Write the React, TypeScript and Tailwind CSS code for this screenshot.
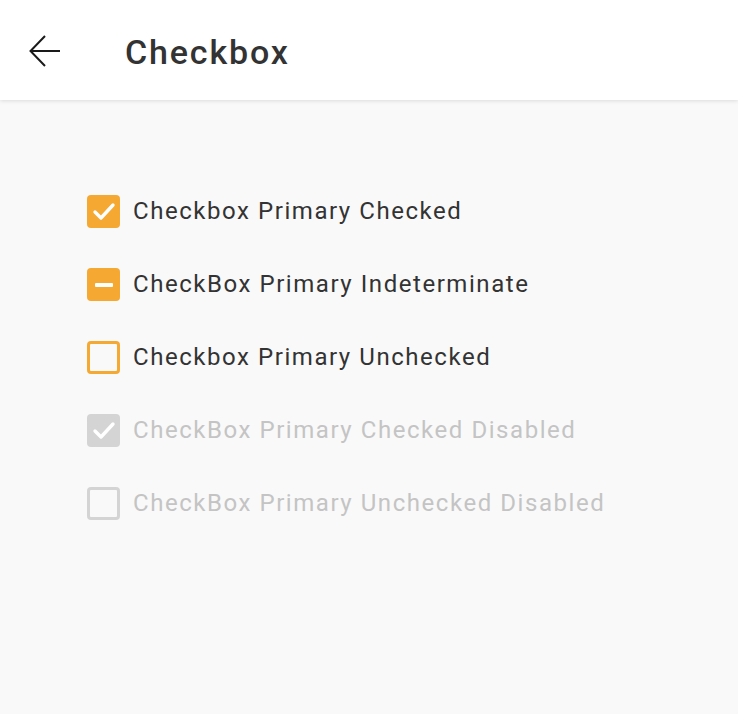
type Item = { label: string; state: "checked" | "indeterminate" | "unchecked"; disabled?: boolean };

const items: Item[] = [
  { label: "Checkbox Primary Checked", state: "checked" },
  { label: "CheckBox Primary Indeterminate", state: "indeterminate" },
  { label: "Checkbox Primary Unchecked", state: "unchecked" },
  { label: "CheckBox Primary Checked Disabled", state: "checked", disabled: true },
  { label: "CheckBox Primary Unchecked Disabled", state: "unchecked", disabled: true },
];

function Box({ state, disabled }: { state: Item["state"]; disabled?: boolean }) {
  if (state === "unchecked") {
    return (
      <div
        className={
          "w-[33px] h-[33px] rounded-[4px] border-[3px] flex-shrink-0 " +
          (disabled ? "border-[#d4d4d4]" : "border-[#f5a832]")
        }
      />
    );
  }
  return (
    <div
      className={
        "w-[33px] h-[33px] rounded-[4px] flex items-center justify-center flex-shrink-0 " +
        (disabled ? "bg-[#d4d4d4]" : "bg-[#f5a832]")
      }
    >
      {state === "checked" ? (
        <svg width="33" height="33" viewBox="0 0 33 33" fill="none">
          <path d="M8 17l6 6L26 10" stroke="white" strokeWidth="3.4" strokeLinecap="round" strokeLinejoin="round" />
        </svg>
      ) : (
        <div className="w-[18px] h-[4px] bg-white rounded-[1px]" />
      )}
    </div>
  );
}

export default function App() {
  return (
    <div className="min-h-[714px] bg-[#f9f9f9] font-['Roboto',sans-serif]">
      <header className="h-[100px] bg-white flex items-center shadow-[0_1px_4px_rgba(0,0,0,0.12)]">
        <svg width="32" height="32" viewBox="0 0 32 32" fill="none" className="ml-[29px] mt-[2px]">
          <path d="M31 16H2M16 1L1.5 16L16 31" stroke="#1a1a1a" strokeWidth="2" strokeLinejoin="miter" />
        </svg>
        <h1 className="ml-[64px] mt-[4px] text-[34px] leading-[40px] font-medium text-[#333] tracking-[1.85px]">Checkbox</h1>
      </header>
      <div className="pt-[95px] pl-[87px] flex flex-col gap-[40px]">
        {items.map(it => (
          <div key={it.label} className="flex items-center gap-[13px]">
            <Box state={it.state} disabled={it.disabled} />
            <span
              className={
                "text-[24px] leading-[33px] tracking-[1.55px] " + (it.disabled ? "text-[#c4c4c4]" : "text-[#333]")
              }
            >
              {it.label}
            </span>
          </div>
        ))}
      </div>
    </div>
  );
}
